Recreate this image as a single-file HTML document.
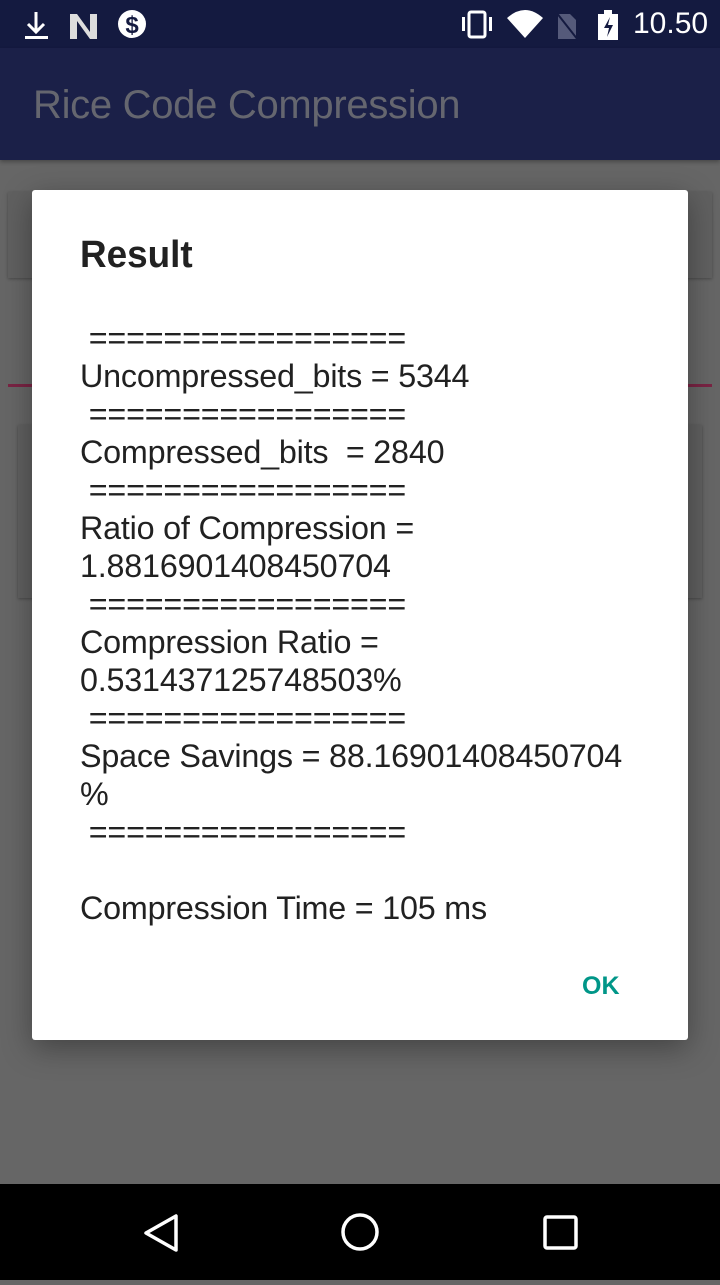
<!DOCTYPE html>
<html><head><meta charset="utf-8"><style>
body{margin:0;width:720px;height:1280px;position:relative;overflow:hidden;background:#666;font-family:"Liberation Sans",sans-serif}
.sb{position:absolute;left:0;top:0;width:720px;height:48px;background:#141a40}
.ab{position:absolute;left:0;top:48px;width:720px;height:112px;background:#1b2048;box-shadow:0 2px 4px rgba(0,0,0,.3)}
.ab span{position:absolute;left:33px;top:35px;font-size:40px;color:#65666f;letter-spacing:-0.3px}
.card1{position:absolute;left:8px;top:192px;width:704px;height:86px;background:#606060;box-shadow:0 1px 3px rgba(0,0,0,.3)}
.line{position:absolute;left:8px;top:384px;width:704px;height:3px;background:#7a2444}
.card2{position:absolute;left:18px;top:425px;width:684px;height:173px;background:#606060;box-shadow:0 1px 3px rgba(0,0,0,.3)}
.dlg{position:absolute;left:32px;top:190px;width:656px;height:850px;background:#fff;border-radius:3px;box-shadow:0 8px 30px rgba(0,0,0,.35)}
.t{position:absolute;left:48px;top:44px;font-size:38px;color:#212121;font-weight:bold;transform:scaleX(.97);transform-origin:left}
.msg{position:absolute;left:48px;top:129px;font-size:32.3px;line-height:38px;color:#212121;white-space:pre;letter-spacing:-0.2px}
.ok{position:absolute;left:550px;top:782px;font-size:25px;font-weight:bold;color:#009688}
.nb{position:absolute;left:0;top:1184px;width:720px;height:96px;background:#000}
.st{position:absolute;top:7px;color:#fff;font-size:30px}
</style></head><body>
<div class="sb">
<svg width="720" height="48" style="position:absolute;left:0;top:0">
<path d="M36 12v20M28 24l8 8 8-8" stroke="#fff" stroke-width="3" fill="none"/><rect x="25" y="36" width="23" height="3" fill="#fff"/>
<path d="M70 14h7l13 18v-18h7v25h-7l-13-18v18h-7z" fill="#ddd"/>
<circle cx="132" cy="24" r="14" fill="#fff"/><text x="132" y="33" font-size="24" font-weight="bold" text-anchor="middle" fill="#141a40" font-family="Liberation Sans">$</text>
<rect x="469" y="12" width="16" height="25" rx="2" stroke="#fff" stroke-width="3" fill="none"/><rect x="462" y="17" width="3" height="14" fill="#fff"/><rect x="489" y="17" width="3" height="14" fill="#fff"/>
<path d="M507 18q18-16 36 0l-18 20z" fill="#fff"/>
<path d="M558 14h12l6 6v19h-18z" fill="#555a7a"/><path d="M556 12l22 28" stroke="#141a40" stroke-width="2"/>
<rect x="598" y="14" width="20" height="26" fill="#fff"/><rect x="604" y="10" width="8" height="4" fill="#fff"/><path d="M610 17l-6 11h5l-2 9 6-12h-5z" fill="#141a40"/>
</svg>
<span class="st" style="left:633px;">10.50</span>
</div>
<div class="ab"><span>Rice Code Compression</span></div>
<div class="card1"></div><div class="line"></div><div class="card2"></div>
<div class="dlg">
<div class="t">Result</div>
<div class="msg"> =================
Uncompressed_bits = 5344
 =================
Compressed_bits  = 2840
 =================
Ratio of Compression =
1.8816901408450704
 =================
Compression Ratio =
0.531437125748503%
 =================
Space Savings = 88.16901408450704
%
 =================

Compression Time = 105 ms</div>
<div class="ok">OK</div>
</div>
<div class="nb">
<svg width="720" height="96">
<path d="M176 32v34l-30-17z" stroke="#fff" stroke-width="3.5" fill="none" stroke-linejoin="round"/>
<circle cx="360" cy="48" r="17" stroke="#fff" stroke-width="3.5" fill="none"/>
<rect x="545" y="33" width="31" height="31" rx="2" stroke="#fff" stroke-width="3.5" fill="none"/>
</svg>
</div>
</body></html>
